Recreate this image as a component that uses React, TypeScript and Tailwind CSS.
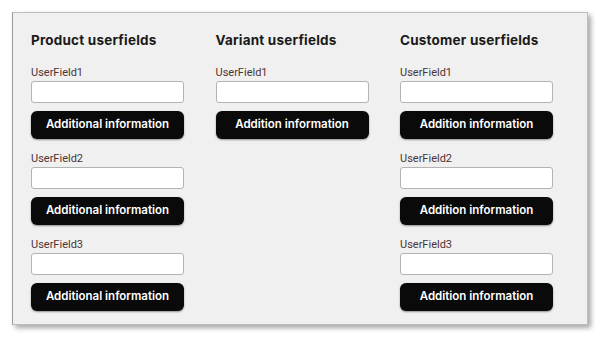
import React from 'react';

type Column = { title: string; fields: string[]; button: string };

const COLUMNS: Column[] = [
  { title: 'Product userfields', fields: ['UserField1', 'UserField2', 'UserField3'], button: 'Additional information' },
  { title: 'Variant userfields', fields: ['UserField1'], button: 'Addition information' },
  { title: 'Customer userfields', fields: ['UserField1', 'UserField2', 'UserField3'], button: 'Addition information' },
];

const App: React.FC = () => {
  return (
    <div className="w-[600px] h-[337px] bg-white pt-[12px] pl-[12px]">
      <div className="w-[576px] h-[313px] bg-[#f0f0f0] border border-[#bdbdbd] border-l-[#9a9a9a] shadow-[3px_3px_5px_rgba(0,0,0,0.35)] pl-[18px] pt-[19px]">
        <div className="flex gap-[31.5px]">
          {COLUMNS.map((col, i) => (
            <div key={i} className="w-[153px] flex flex-col">
              <h2 className="text-[13.5px] leading-[16px] font-bold text-[#1a1a1a] tracking-[0.2px] mb-[19px] whitespace-nowrap" style={{ fontFamily: 'Inter, sans-serif' }}>
                {col.title}
              </h2>
              {col.fields.map((f, j) => (
                <div key={j} className="flex flex-col mb-[14px]">
                  <label className="text-[11px] leading-[12px] text-[#4d3434] mb-[2px]" style={{ fontFamily: 'Roboto, sans-serif' }}>
                    {f}
                  </label>
                  <input className="h-[22px] w-full bg-white border border-[#b3b3b3] rounded-[3px] mb-[8px]" />
                  <button className="h-[28px] w-full bg-[#0a0a0a] rounded-[6px] text-white text-[11.5px] font-semibold shadow-[0_1px_2px_rgba(0,0,0,0.4)]" style={{ fontFamily: 'Inter, sans-serif' }}>
                    {col.button}
                  </button>
                </div>
              ))}
            </div>
          ))}
        </div>
      </div>
    </div>
  );
};

export default App;
